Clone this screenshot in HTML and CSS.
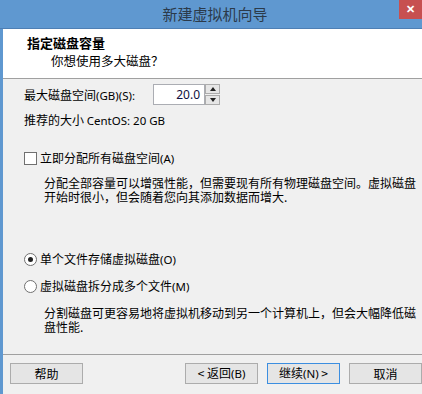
FILE: index.html
```html
<!DOCTYPE html>
<html lang="zh-CN">
<head>
    <meta charset="UTF-8">
    <title>新建虚拟机向导</title>
    <link rel="stylesheet" href="styles.css">
</head>
<body>
    <div class="window">
        <div class="titlebar">
            <span class="title">新建虚拟机向导</span>
            <button class="close-btn">✕</button>
        </div>
        <div class="frame">
            <div class="header">
                <h3>指定磁盘容量</h3>
                <p>你想使用多大磁盘？</p>
            </div>
            <div class="content">
                <div class="size-row">
                    <label>最大磁盘空间<span class="latin">(GB)(S):</span></label>
                    <div class="spin">
                        <span class="spin-value">20.0</span>
                        <div class="spin-btns">
                            <span class="spin-up"></span>
                            <span class="spin-down"></span>
                        </div>
                    </div>
                </div>
                <div class="recommend">推荐的大小 <span class="latin">CentOS: 20 GB</span></div>

                <div class="option check-option">
                    <span class="checkbox"></span>
                    <span>立即分配所有磁盘空间<span class="latin">(A)</span></span>
                </div>
                <p class="note">分配全部容量可以增强性能，但需要现有所有物理磁盘空间。虚拟磁盘开始时很小，但会随着您向其添加数据而增大.</p>

                <div class="option radio-option first-radio">
                    <span class="radio checked"></span>
                    <span>单个文件存储虚拟磁盘<span class="latin">(O)</span></span>
                </div>
                <div class="option radio-option">
                    <span class="radio"></span>
                    <span>虚拟磁盘拆分成多个文件<span class="latin">(M)</span></span>
                </div>
                <p class="note">分割磁盘可更容易地将虚拟机移动到另一个计算机上，但会大幅降低磁盘性能.</p>
            </div>
            <div class="footer">
                <button class="btn">帮助</button>
                <div class="footer-right">
                    <button class="btn">&lt; 返回<span class="latin">(B)</span></button>
                    <button class="btn primary">继续<span class="latin">(N)</span> &gt;</button>
                    <button class="btn">取消</button>
                </div>
            </div>
        </div>
    </div>
</body>
</html>
```

FILE: styles.css
```css
html, body {
    margin: 0;
    padding: 0;
}

body {
    width: 422px;
    height: 394px;
    overflow: hidden;
    font-family: "Noto Sans CJK SC", "Noto Sans", sans-serif;
    font-size: 12px;
    color: #000;
    background: #f0f0f0;
}

.window {
    width: 422px;
    height: 394px;
    display: flex;
    flex-direction: column;
}

.titlebar {
    height: 28px;
    background: #5f98d0;
    border-bottom: 1px solid #4e7fb4;
    display: flex;
    align-items: flex-start;
    position: relative;
}

.title {
    flex: 1;
    text-align: center;
    font-size: 15px;
    line-height: 28px;
    color: #2b3a4a;
    padding-left: 8px;
}

.close-btn {
    position: absolute;
    top: 0;
    right: 0;
    width: 23px;
    height: 19px;
    border: none;
    padding: 0;
    background: #c75050;
    color: #fff;
    font-size: 11px;
    font-weight: bold;
    line-height: 19px;
}

.frame {
    flex: 1;
    border-left: 3px solid #5f98d0;
    display: flex;
    flex-direction: column;
}

.header {
    height: 50px;
    background: #fff;
    border-bottom: 1px solid #a0a0a0;
    padding: 5px 0 0 24px;
    box-sizing: border-box;
}

.header h3 {
    margin: 0;
    font-size: 13px;
    line-height: 18px;
    font-weight: bold;
}

.header p {
    margin: 0 0 0 24px;
    font-size: 12.5px;
    line-height: 18px;
}

.latin {
    font-family: "Noto Sans", sans-serif;
    font-size: 11.5px;
}

.content {
    flex: 1;
    padding: 5px 0 0 21px;
}

.size-row {
    display: flex;
    align-items: center;
    height: 21px;
}

.size-row label {
    width: 129px;
}

.spin {
    display: flex;
    height: 21px;
}

.spin-value {
    width: 46px;
    height: 19px;
    border: 1px solid #abadb3;
    background: #fff;
    text-align: right;
    padding-right: 4px;
    line-height: 19px;
    font-family: "Noto Sans", sans-serif;
    font-size: 12px;
    color: #101040;
}

.spin-btns {
    display: flex;
    flex-direction: column;
    gap: 1px;
    width: 15px;
    height: 21px;
}

.spin-btns span {
    flex: 1;
    border: 1px solid #acacac;
    background: #e6e6e6;
    position: relative;
}

.spin-up::after,
.spin-down::after {
    content: "";
    position: absolute;
    left: 4px;
    top: 2px;
    border-left: 3px solid transparent;
    border-right: 3px solid transparent;
}

.spin-up::after {
    border-bottom: 4px solid #222;
}

.spin-down::after {
    border-top: 4px solid #222;
}

.recommend {
    margin-top: 5px;
    line-height: 20px;
}

.option {
    display: flex;
    align-items: center;
    gap: 3px;
    line-height: 16px;
}

.check-option {
    margin-top: 19px;
}

.checkbox {
    width: 11px;
    height: 11px;
    border: 1px solid #707070;
    background: #fff;
}

.radio {
    width: 11px;
    height: 11px;
    border: 1px solid #707070;
    border-radius: 50%;
    background: #fff;
    position: relative;
}

.radio.checked::after {
    content: "";
    position: absolute;
    left: 3px;
    top: 3px;
    width: 5px;
    height: 5px;
    border-radius: 50%;
    background: #222;
}

.note {
    margin: 9px 0 0 20px;
    line-height: 14px;
}

.first-radio {
    margin-top: 47px;
}

.radio-option + .radio-option {
    margin-top: 10px;
}

.radio-option + .note {
    margin-top: 11px;
}

.footer {
    height: 31px;
    border-top: 1px solid #a0a0a0;
    margin-bottom: 0;
    display: flex;
    justify-content: space-between;
    align-items: flex-start;
    padding: 8px 0 0 7px;
}

.footer-right {
    display: flex;
    gap: 9px;
}

.btn {
    width: 73px;
    height: 21px;
    padding: 0;
    border: 1px solid #acacac;
    background: #e5e5e5;
    font-family: "Noto Sans CJK SC", "Noto Sans", sans-serif;
    font-size: 12px;
    line-height: 18px;
    color: #000;
}

.btn.primary {
    border-color: #3c8ee0;
}
```
